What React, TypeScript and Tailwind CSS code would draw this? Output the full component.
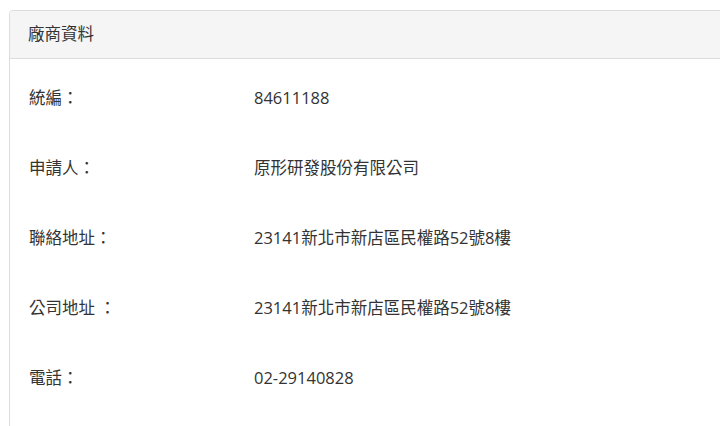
const rows = [
  { label: '統編：', value: '84611188' },
  { label: '申請人：', value: '原形研發股份有限公司' },
  { label: '聯絡地址：', value: '23141新北市新店區民權路52號8樓' },
  { label: '公司地址 ：', value: '23141新北市新店區民權路52號8樓' },
  { label: '電話：', value: '02-29140828' },
];

const App = () => {
  return (
    <div
      className="w-[720px] h-[426px] overflow-hidden bg-white text-[#333] pt-[10px] pl-[9px]"
      style={{ fontFamily: '"Open Sans", "Noto Sans CJK TC", sans-serif' }}
    >
      <div className="w-[760px] h-[460px] border border-[#dddddd] rounded-[4px] bg-white">
        <div className="h-[48px] flex items-center pl-[18px] bg-[#f5f5f5] border-b border-[#dddddd] rounded-t-[4px] text-[16.5px]">
          廠商資料
        </div>
        <div className="pt-[4px] pl-[19px]">
          {rows.map((row, i) => (
            <div key={i} className="h-[70px] flex items-center text-[16.5px]">
              <div className="w-[225px]">{row.label}</div>
              <div>{row.value}</div>
            </div>
          ))}
        </div>
      </div>
    </div>
  );
};

export default App;
